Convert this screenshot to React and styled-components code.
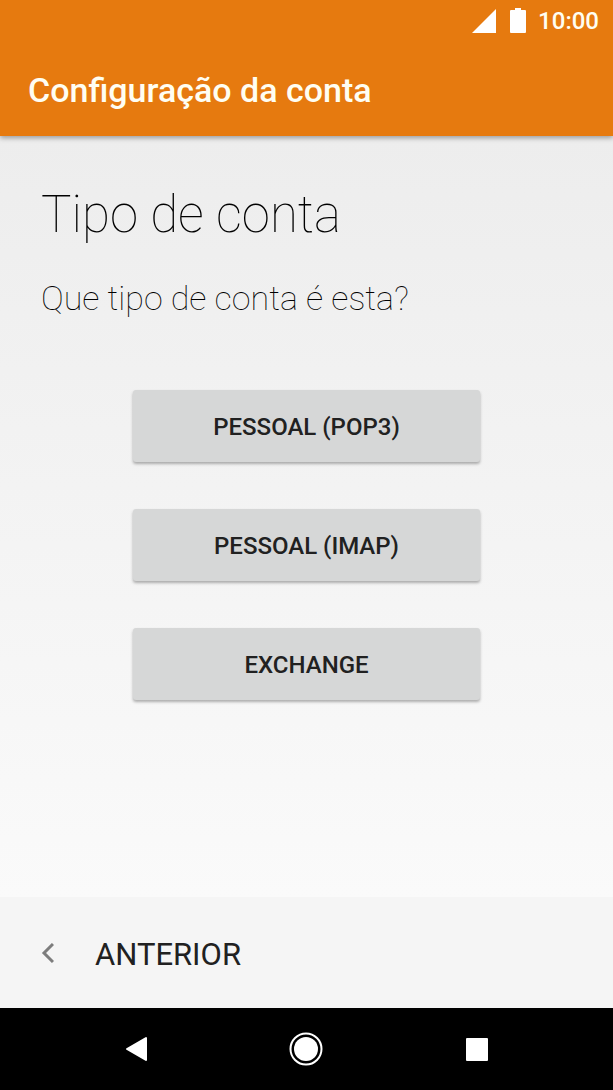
import React from 'react';
import styled, { createGlobalStyle } from 'styled-components';

const GlobalStyle = createGlobalStyle`
  * { box-sizing: border-box; }
  body {
    margin: 0;
    font-family: Roboto, 'Noto Sans', sans-serif;
    color: #212121;
    background: #000;
  }
`;

const Screen = styled.div`
  min-height: 100vh;
  display: flex;
  flex-direction: column;
`;

const Header = styled.header`
  position: relative;
  background: #e67a0f;
  color: #fffef2;
  box-shadow: 0 2px 5px rgba(0, 0, 0, 0.35);
`;

const StatusBar = styled.div`
  display: flex;
  justify-content: flex-end;
  align-items: center;
  height: 42px;
  padding: 0 14px;
  font-size: 24px;
  font-weight: 500;
`;

const SignalIcon = styled.svg`
  width: 24px;
  height: 24px;
  margin-right: 14px;
`;

const BatteryIcon = styled.svg`
  width: 16px;
  height: 26px;
  margin-right: 12px;
`;

const Title = styled.h1`
  margin: 0;
  padding: 28px 28px 26px;
  font-size: 34px;
  font-weight: 500;
  line-height: 40px;
`;

const Main = styled.main`
  flex: 1;
  padding: 44px 41px;
  background: linear-gradient(#ededed, #fafafa);
`;

const Heading = styled.h2`
  margin: 0;
  color: #000;
  font-size: 51px;
  font-weight: 100;
  line-height: 70px;
`;

const Question = styled.p`
  margin: 26px 0 0;
  color: #000;
  font-size: 34px;
  font-weight: 100;
  line-height: 44px;
`;

const Options = styled.div`
  display: flex;
  flex-direction: column;
  gap: 47px;
  margin: 70px 92px 0;
`;

const OptionButton = styled.button`
  height: 72px;
  padding: 2px 0 0;
  border: 0;
  border-radius: 3px;
  background: #d6d7d7;
  color: #212121;
  font: 500 24px Roboto, sans-serif;
  text-transform: uppercase;
  box-shadow: 0 2px 3px rgba(0, 0, 0, 0.3);
  cursor: pointer;
`;

const Footer = styled.footer`
  display: flex;
  height: 111px;
  padding: 4px 41px 0;
  background: #f5f5f5;
`;

const BackButton = styled.button`
  display: flex;
  align-items: center;
  gap: 41px;
  padding: 0;
  border: 0;
  background: none;
  color: #212121;
  font: 400 31px/36px Roboto, sans-serif;
  text-transform: uppercase;
  cursor: pointer;
`;

const NavBar = styled.nav`
  display: flex;
  justify-content: center;
  align-items: center;
  gap: 142px;
  height: 82px;
  background: #000;
`;

const NavButton = styled.button`
  display: flex;
  padding: 0;
  border: 0;
  background: none;
  cursor: pointer;
`;

const accountTypes = ['Pessoal (POP3)', 'Pessoal (IMAP)', 'Exchange'];

export default function App() {
  return (
    <Screen>
      <GlobalStyle />
      <Header>
        <StatusBar>
          <SignalIcon viewBox="0 0 24 24" aria-hidden="true">
            <path d="M24 0v24H0z" fill="#fff" />
          </SignalIcon>
          <BatteryIcon viewBox="0 0 16 26" aria-hidden="true">
            <path d="M5 0h6v2h4q1 0 1 1v21q0 1-1 1H1q-1 0-1-1V3q0-1 1-1h4z" fill="#fff" />
          </BatteryIcon>
          <time>10:00</time>
        </StatusBar>
        <Title>Configuração da conta</Title>
      </Header>
      <Main>
        <Heading>Tipo de conta</Heading>
        <Question>Que tipo de conta é esta?</Question>
        <Options>
          {accountTypes.map((type) => (
            <OptionButton key={type} type="button">{type}</OptionButton>
          ))}
        </Options>
      </Main>
      <Footer>
        <BackButton type="button">
          <svg width="13" height="24" viewBox="0 0 13 24" aria-hidden="true">
            <path d="M12 1L3 10l9 9" fill="none" stroke="#7d7d7d" strokeWidth="3" />
          </svg>
          Anterior
        </BackButton>
      </Footer>
      <NavBar>
        <NavButton type="button" aria-label="Voltar">
          <svg width="22" height="26" viewBox="0 0 22 26" aria-hidden="true">
            <path d="M21 2v22L2 13z" fill="#fff" stroke="#fff" strokeWidth="2" strokeLinejoin="round" />
          </svg>
        </NavButton>
        <NavButton type="button" aria-label="Início">
          <svg width="34" height="34" viewBox="0 0 34 34" aria-hidden="true">
            <circle cx="17" cy="17" r="15.500" fill="none" stroke="#fff" strokeWidth="2" />
            <circle cx="17" cy="17" r="12" fill="#fff" />
          </svg>
        </NavButton>
        <NavButton type="button" aria-label="Recentes">
          <svg width="24" height="24" viewBox="0 0 24 24" aria-hidden="true">
            <rect x="1" y="1" width="22" height="23" rx="1" fill="#fff" />
          </svg>
        </NavButton>
      </NavBar>
    </Screen>
  );
}
